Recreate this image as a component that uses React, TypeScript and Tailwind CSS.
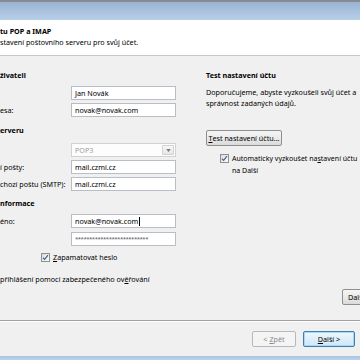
import type { ReactNode } from "react";

function TextBox({ children, className = "" }: { children?: ReactNode; className?: string }) {
	return (
		<div className={`flex h-[14px] w-[105px] items-center border border-[#b9bec6] bg-white px-[3px] ${className}`}>
			{children}
		</div>
	);
}

function Field({ label, children, className = "" }: { label?: string; children: ReactNode; className?: string }) {
	return (
		<div className={`flex items-center justify-between ${className}`}>
			<span className="leading-[10px]">{label}</span>
			{children}
		</div>
	);
}

function CheckBox() {
	return (
		<span className="flex h-[9px] w-[9px] shrink-0 items-center justify-center border border-[#8e8f8f] bg-gradient-to-br from-[#d9dde3] to-[#fbfbfb]">
			<svg viewBox="0 0 8 8" className="h-[7px] w-[7px]">
				<path d="M1.2 4.3 3 6.2 6.8 1.4" fill="none" stroke="#4b5f8c" strokeWidth="1.3" />
			</svg>
		</span>
	);
}

export default function App() {
	return (
		<div className="flex h-[360px] w-[360px] flex-col overflow-hidden bg-[#f0f0f0] font-['Noto_Sans','Liberation_Sans',sans-serif] text-[7.2px] text-black">
			{/* window frame */}
			<div className="h-[2px] bg-[#868b91]" />
			<div className="h-[18px] bg-gradient-to-b from-[#99b3d2] to-[#b8cfe8]" />

			<div className="h-[36px] border-b border-[#c6c6c6] bg-white pt-[6px] leading-[10px]">
				<p className="font-bold">tu POP a IMAP</p>
				<p className="mt-[1px]">stavení poštovního serveru pro svůj účet.</p>
			</div>

			<div className="flex h-[264px]">
				{/* left column */}
				<div className="flex w-[176px] shrink-0 flex-col">
					<p className="mt-[14px] font-bold leading-[10px]">živateli</p>
					<Field className="mt-[6px]">
						<TextBox>Jan Novák</TextBox>
					</Field>
					<Field label="esa:" className="mt-[3px]">
						<TextBox>novak@novak.com</TextBox>
					</Field>

					<p className="mt-[8px] font-bold leading-[10px]">erveru</p>
					<Field className="mt-[8px]">
						<div className="flex h-[14px] w-[105px] items-center justify-between border border-[#cfd2d6] bg-[#fdfdfd] pl-[3px] pr-[1px] text-[#9a9a9a]">
							<span>POP3</span>
							<span className="flex h-[10px] w-[12px] items-center justify-center rounded-[1px] border border-[#d2d2d2] bg-gradient-to-b from-[#f7f7f7] to-[#e6e6e6]">
								<svg viewBox="0 0 6 4" className="h-[3px] w-[5px]">
									<path d="M0 0h6L3 4z" fill="#7a7a7a" />
								</svg>
							</span>
						</div>
					</Field>
					<Field label="í pošty:" className="mt-[3px]">
						<TextBox>mail.czmi.cz</TextBox>
					</Field>
					<Field label="chozí poštu (SMTP):" className="mt-[3px]">
						<TextBox>mail.czmi.cz</TextBox>
					</Field>

					<p className="mt-[7px] font-bold leading-[10px]">nformace</p>
					<Field label="éno:" className="mt-[6px]">
						<TextBox>
							novak@novak.com
							<span className="ml-[1px] h-[9px] w-px bg-black" />
						</TextBox>
					</Field>
					<Field className="mt-[4px]">
						<TextBox className="text-[6px] tracking-[-0.5px] text-[#555]">**************************</TextBox>
					</Field>

					<div className="mt-[6px] flex h-[10px] items-center gap-[3px] pl-[41px]">
						<CheckBox />
						<span>
							<span className="underline">Z</span>apamatovat heslo
						</span>
					</div>
					<p className="mt-[12px] whitespace-nowrap leading-[10px]">
						přihlášení pomocí zabezpečeného ov<span className="underline">ě</span>řování
					</p>
				</div>

				{/* right column */}
				<div className="ml-[30px] flex w-[200px] shrink-0 flex-col">
					<p className="mt-[14px] font-bold leading-[10px]">Test nastavení účtu</p>
					<div className="mt-[7px] leading-[11px]">
						<p className="whitespace-nowrap">Doporučujeme, abyste vyzkoušeli svůj účet a</p>
						<p>správnost zadaných údajů.</p>
					</div>
					<button
						type="button"
						className="mt-[21px] flex h-[16px] w-[76px] items-center justify-center rounded-[2px] border border-[#8e8f8f] bg-gradient-to-b from-[#f5f5f5] via-[#ebebeb] to-[#dadada]"
					>
						<span className="underline">T</span>est nastavení účtu...
					</button>
					<div className="mt-[7px] flex gap-[3px] pl-[14px] text-[7px] leading-[12px]">
						<span className="mt-[1px]">
							<CheckBox />
						</span>
						<div>
							<p className="whitespace-nowrap">
								Automaticky vyzkoušet na<span className="underline">s</span>tavení účtu
							</p>
							<p>na Další</p>
						</div>
					</div>
					<button
						type="button"
						className="ml-[136px] mt-[112px] flex h-[16px] w-[72px] shrink-0 items-center whitespace-nowrap rounded-[2px] border border-[#8e8f8f] bg-gradient-to-b from-[#f5f5f5] via-[#ebebeb] to-[#dadada] pl-[5px]"
					>
						Další nastavení...
					</button>
				</div>
			</div>

			{/* footer */}
			<div className="flex h-[36px] items-start justify-end gap-[7px] border-t border-[#a0a0a0] pr-[5px] pt-[10px] shadow-[inset_0_1px_0_#ffffff]">
				<button
					type="button"
					disabled
					className="flex h-[16px] w-[44px] items-center justify-center rounded-[2px] border border-[#b5b9bd] bg-[#f4f4f4] text-[#8a8a8a]"
				>
					&lt; <span className="ml-[2px] underline">Z</span>pět
				</button>
				<button
					type="button"
					className="flex h-[16px] w-[52px] items-center justify-center rounded-[2px] border border-[#3c7fb1] bg-gradient-to-b from-[#eef7fd] to-[#cfe6f7] shadow-[inset_0_0_0_1px_#a8d8f4]"
				>
					<span className="underline">D</span>alší &gt;
				</button>
			</div>
			<div className="h-[4px] bg-gradient-to-b from-[#a9c3e2] to-[#bdd3ec]" />
		</div>
	);
}
